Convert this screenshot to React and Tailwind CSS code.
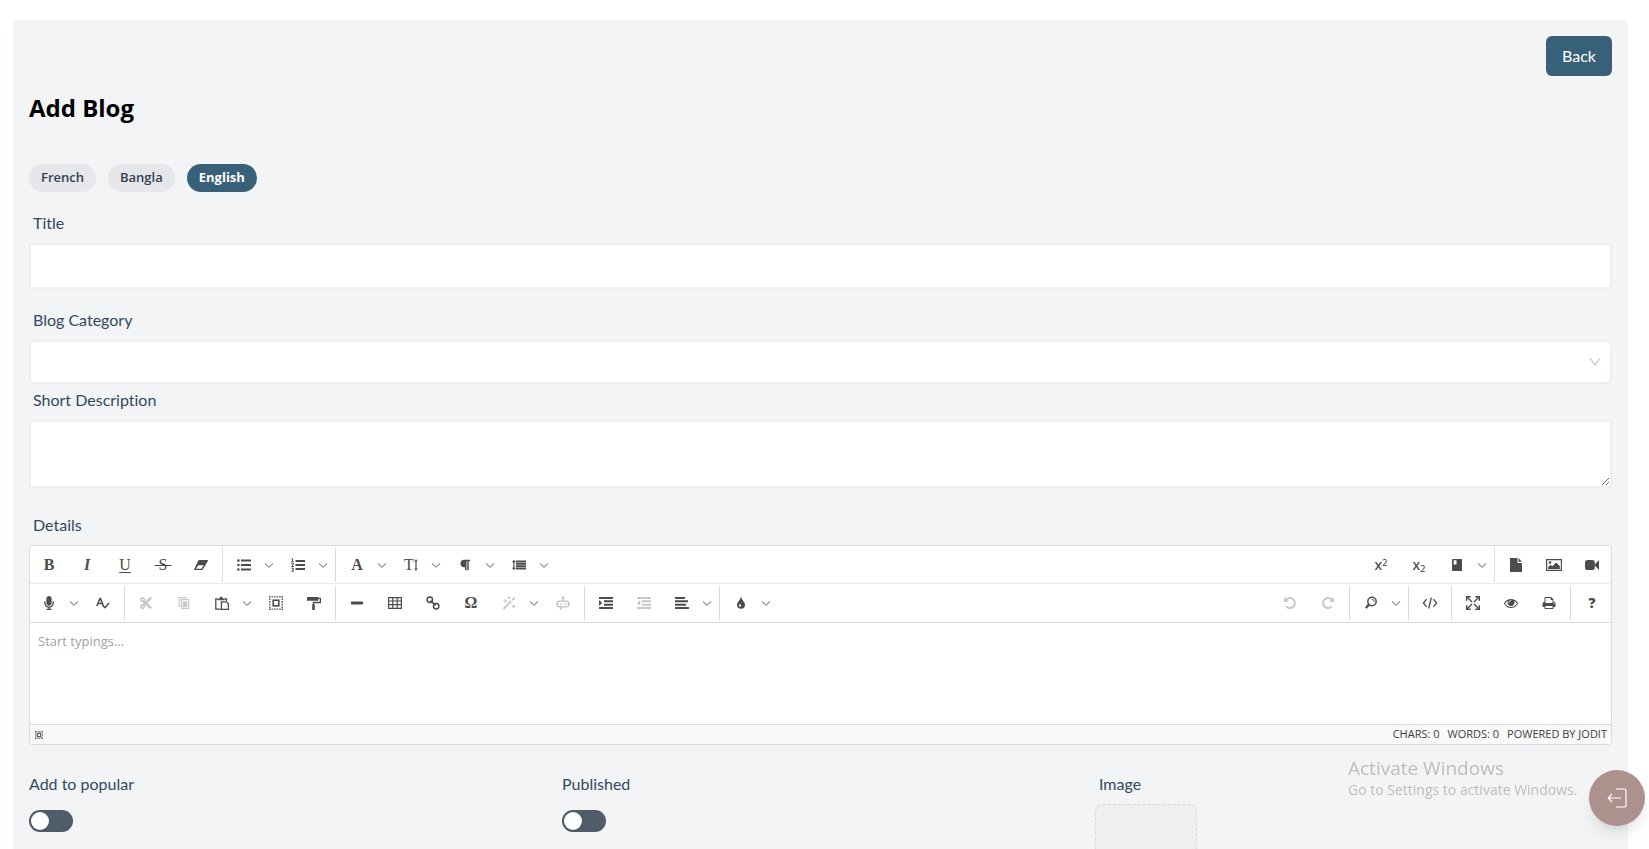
import React, { useState } from 'react';
import { FaMicrophone, FaParagraph, FaCut } from 'react-icons/fa';

const Svg = ({ children, viewBox = '0 0 14 14' }) => (
  <svg viewBox={viewBox} className="w-3.5 h-3.5" fill="currentColor" aria-hidden="true">
    {children}
  </svg>
);

const Stroke = ({ d, width = 1.2 }) => (
  <path d={d} fill="none" stroke="currentColor" strokeWidth={width} />
);

const Glyph = ({ children, className = '' }) => (
  <span className={`font-['Liberation_Serif',serif] leading-none ${className}`}>{children}</span>
);

const icons = {
  bold: <Glyph className="text-base font-bold">B</Glyph>,
  italic: <Glyph className="text-base font-bold italic">I</Glyph>,
  underline: <Glyph className="text-base underline underline-offset-2 decoration-1">U</Glyph>,
  strike: <Glyph className="text-base line-through decoration-1">&nbsp;S&nbsp;</Glyph>,
  eraser: (
    <Svg>
      <path fillRule="evenodd" d="M5.4 2h8q.9.2.4 1.200L8.700 11.500q-.4.600-1 .600H.6q-.9-.2-.4-1.200L4.400 2.600q.4-.6 1-.6zM4.500 7.200 1.700 10.800h5.600l2.400-3.600z" />
    </Svg>
  ),
  ul: (
    <Svg>
      <path d="M4 1.5h10v2H4zM4 6h10v2H4zM4 10.5h10v2H4z" />
      <circle cx="1.4" cy="2.5" r="1.3" />
      <circle cx="1.4" cy="7" r="1.3" />
      <circle cx="1.4" cy="11.5" r="1.3" />
    </Svg>
  ),
  ol: (
    <Svg>
      <path d="M4.5 2H14v2H4.500zM4.500 6H14v2H4.500zM4.500 10H14v2H4.500z" />
      <Stroke width={1} d="M.5.8h1v3M.3 3.900h2.600M.4 5.600h2v1.200L.7 8.500h2.200M.4 10.200h2L1.400 11.600h1v1.700H.3" />
    </Svg>
  ),
  font: <Glyph className="text-base font-bold">A</Glyph>,
  fontsize: (
    <span className="flex items-center">
      <Glyph className="text-base">T</Glyph>
      <svg viewBox="0 0 4 14" className="w-1 h-3.5" fill="currentColor" aria-hidden="true">
        <path d="M1.400 2h1.200v10H1.400zM2 1l1.700 2.500H.3zM2 13 .3 10.500h3.400z" />
      </svg>
    </span>
  ),
  paragraph: <FaParagraph className="w-3 h-3" />,
  lineHeight: (
    <Svg>
      <path d="M4 2.500h10v2H4zM4 5h10v1.700H4zM4 7.300h10V9H4zM4 9.600h10v2H4zM1.300 3.500h1.200v7H1.300zM1.900 1.700l2 2.600H0zM1.900 12.300 0 9.700h3.900z" />
    </Svg>
  ),
  mic: <FaMicrophone className="w-3.5 h-3.5" />,
  spell: (
    <Svg>
      <Stroke width={1.5} d="M.8 10 4 2.500h.5L7.400 10M2 7.400h4.400M6.400 9l2.600 2.700 4-4.600" />
    </Svg>
  ),
  cut: <FaCut className="w-3.5 h-3.5" />,
  copy: (
    <Svg>
      <Stroke d="M3.600 10.400H2.200V1.600h7v1.200M4.600 3.600h7v8.800h-7z" />
      <path d="M6 5.500h4.200V11H6z" />
    </Svg>
  ),
  paste: (
    <Svg>
      <Stroke width={1.3} d="M5.800 13.200H.8V3h2M9.500 3h2v2" />
      <path d="M3 4.300V2.600h1.700Q4.800.4 6.200.4t1.600 2.200h1.700v1.700z" />
      <Stroke width={1.3} d="M6.400 5.800h5l2 2v5.500h-7z" />
    </Svg>
  ),
  selectall: (
    <Svg>
      <rect x="4.2" y="4.2" width="5.6" height="5.6" fill="none" stroke="currentColor" strokeWidth="1.6" />
      <path d="M0 .8h14M0 13.200h14M.8 0v14M13.200 0v14" fill="none" stroke="currentColor" strokeWidth="1.3" strokeDasharray="1.55 1" />
    </Svg>
  ),
  brush: (
    <Svg>
      <path d="M0 1h11.500v3.800H0z" />
      <Stroke width={1.3} d="M11.500 2.300h2v4.200H6.400v2" />
      <path d="M5.200 8.200h2.600V14H5.200z" />
    </Svg>
  ),
  hr: (
    <Svg>
      <rect x="1" y="5.6" width="12" height="2.8" rx=".6" />
    </Svg>
  ),
  table: (
    <Svg>
      <Stroke d="M.6 1.600h12.800v10.800H.6zM.6 5h12.800M.6 8.600h12.800M4.800 1.600v10.800M9.200 1.600v10.800" />
    </Svg>
  ),
  link: (
    <Svg>
      <circle cx="3.8" cy="3.8" r="2.7" fill="none" stroke="currentColor" strokeWidth="1.5" />
      <circle cx="10.2" cy="10.2" r="2.7" fill="none" stroke="currentColor" strokeWidth="1.5" />
      <Stroke width={1.5} d="M4.500 4.500q.8 2.700 2.500 2.500t2.500 2.500" />
    </Svg>
  ),
  omega: <Glyph className="text-base font-bold">Ω</Glyph>,
  magic: (
    <Svg>
      <Stroke width={2} d="M1.500 13 9.200 5.200M10.200 4.200l2.500-2.600" />
      <Stroke width={1.2} d="M3.200 3v4M1.200 5h4M7 .3v3M5.500 1.800h3M11.500 8.500v3.600M9.700 10.300h3.600" />
    </Svg>
  ),
  robot: (
    <Svg>
      <Stroke width={1.5} d="M3 5.200h8q1.400 0 1.400 1.400v2.800q0 1.400-1.400 1.400H6.500L4.600 12.800v-2H3q-1.400 0-1.400-1.400V6.600q0-1.400 1.400-1.400zM7 5V2.500M.5 6.800v2.400M13.500 6.800v2.400" />
      <circle cx="7" cy="1.800" r="1.5" />
      <circle cx="4.9" cy="8" r="1" />
      <circle cx="9.1" cy="8" r="1" />
    </Svg>
  ),
  indent: (
    <Svg>
      <path d="M0 1h14v2H0zM5 4.300h9v2H5zM5 7.700h9v2H5zM0 11h14v2H0zM0 4l3.200 3L0 10z" />
    </Svg>
  ),
  outdent: (
    <Svg>
      <path d="M0 1h14v2H0zM5 4.300h9v2H5zM5 7.700h9v2H5zM0 11h14v2H0zM3.200 4 0 7l3.200 3z" />
    </Svg>
  ),
  alignLeft: (
    <Svg>
      <path d="M0 1h10v2H0zM0 4.300h13v2H0zM0 7.700h11v2H0zM0 11h14v2H0z" />
    </Svg>
  ),
  drop: (
    <Svg>
      <path fillRule="evenodd" d="M7 .5q.7 2.700 2.400 4.800Q11 7.200 11 8.700a4 4 0 0 1-8 0q0-1.500 1.600-3.400Q6.300 3.200 7 .5zM5 8.500v2h2v-2z" />
    </Svg>
  ),
  sup: (
    <span className="font-['Noto_Sans',sans-serif] text-sm leading-none font-medium">
      x<sup className="text-[9px]">2</sup>
    </span>
  ),
  sub: (
    <span className="font-['Noto_Sans',sans-serif] text-sm leading-none font-medium">
      x<sub className="text-[9px]">2</sub>
    </span>
  ),
  book: (
    <Svg>
      <path fillRule="evenodd" d="M3 1h8.200q.8 0 .8.800v10.400q0 .8-.8.800H3q-1 0-1-1V2q0-1 1-1zM3.700 2.200v4.300h2.800V2.200z" />
    </Svg>
  ),
  file: (
    <Svg>
      <path d="M1 0h7.500v5H13v9H1zM9.500 0 13 3.800H9.500z" />
    </Svg>
  ),
  image: (
    <svg viewBox="0 0 16 14" className="w-4 h-3.5" fill="currentColor" aria-hidden="true">
      <Stroke d="M.6 1.600h14.800v10.800H.6z" />
      <circle cx="4" cy="4.6" r="1.3" />
      <path d="M2.200 11V9l2.400-2.300L6.300 8.300 10.200 4.400 13.800 8v3z" />
    </svg>
  ),
  video: (
    <Svg>
      <rect x="0" y="2" width="9.8" height="10" rx="2.6" />
      <path d="M9.200 7 14 2v10z" />
    </Svg>
  ),
  undo: (
    <Svg>
      <Stroke width={2} d="M2.800 4.200A5 5 0 1 1 3.200 10.400" />
      <path d="M1 1v5h5z" />
    </Svg>
  ),
  redo: (
    <Svg>
      <Stroke width={2} d="M11.200 4.200A5 5 0 1 0 10.800 10.400" />
      <path d="M13 1v5H8z" />
    </Svg>
  ),
  search: (
    <Svg>
      <circle cx="8" cy="5.5" r="4.2" fill="none" stroke="currentColor" strokeWidth="1.5" />
      <Stroke width={2.4} d="M5 8.700 1.800 12" />
      <Stroke width={1} d="M8 3.300q2 .2 2.200 2.200" />
    </Svg>
  ),
  code: (
    <svg viewBox="0 0 16 14" className="w-4 h-3.5" aria-hidden="true">
      <Stroke width={1.3} d="M4.600 3.200 1.400 7l3.200 3.800M11.400 3.200 14.600 7l-3.200 3.800M9.300 1.500 6.700 12.500" />
    </svg>
  ),
  fullsize: (
    <Svg>
      <Stroke width={1.3} d="M1 1l5 5M13 1 8 6M1 13l5-5M13 13 8 8" />
      <Stroke width={1.5} d="M.7 4.700v-4h4M9.300.7h4v4M.7 9.300v4h4M13.300 9.300v4h-4" />
    </Svg>
  ),
  eye: (
    <Svg viewBox="0 0 1792 1792">
      <path d="M1664 960q-152-236-381-353 61 104 61 225 0 185-131.500 316.500t-316.500 131.500-316.500-131.500-131.500-316.500q0-121 61-225-229 117-381 353 133 205 333.500 326.500t434.500 121.500 434.500-121.500 333.500-326.500zm-720-384q0-20-14-34t-34-14q-125 0-214.500 89.500t-89.500 214.500q0 20 14 34t34 14 34-14 14-34q0-86 61-147t147-61q20 0 34-14t14-34zm848 384q0 34-20 69-140 230-376.500 368.500t-499.500 138.500-499.500-139-376.500-368q-20-35-20-69t20-69q140-229 376.500-368t499.500-139 499.500 139 376.500 368q20 35 20 69z" />
    </Svg>
  ),
  print: (
    <Svg viewBox="0 0 1792 1792">
      <path d="M448 1536h896v-256h-896v256zm0-640h896v-384h-160q-40 0-68-28t-28-68v-160h-640v640zm1152 64q0-26-19-45t-45-19-45 19-19 45 19 45 45 19 45-19 19-45zm128 0v416q0 13-9.500 22.500t-22.500 9.500h-224v160q0 40-28 68t-68 28h-960q-40 0-68-28t-28-68v-160h-224q-13 0-22.500-9.500t-9.500-22.500v-416q0-79 56.500-135.500t135.500-56.500h64v-544q0-40 28-68t68-28h672q40 0 88 20t76 48l152 152q28 28 48 76t20 88v256h64q79 0 135.500 56.500t56.500 135.500z" />
    </Svg>
  ),
  about: <span className="font-['Open_Sans',sans-serif] text-sm leading-none font-extrabold">?</span>,
};

// each inner array is a separated group: [icon, label, hasMenu, disabled]
const rowOneLeft = [
  [['bold', 'Bold'], ['italic', 'Italic'], ['underline', 'Underline'], ['strike', 'Strike through'], ['eraser', 'Clear formatting']],
  [['ul', 'Insert unordered list', true], ['ol', 'Insert ordered list', true]],
  [['font', 'Font family', true], ['fontsize', 'Font size', true], ['paragraph', 'Format block', true], ['lineHeight', 'Line height', true]],
];
const rowOneRight = [
  [['sup', 'Superscript'], ['sub', 'Subscript'], ['book', 'Insert class name', true]],
  [['file', 'Insert file'], ['image', 'Insert image'], ['video', 'Insert video']],
];
const rowTwoLeft = [
  [['mic', 'Speech recognize', true], ['spell', 'Spellcheck']],
  [['cut', 'Cut', false, true], ['copy', 'Copy', false, true], ['paste', 'Paste', true], ['selectall', 'Select all'], ['brush', 'Paint format']],
  [['hr', 'Insert horizontal line'], ['table', 'Insert table'], ['link', 'Insert link'], ['omega', 'Insert special character'], ['magic', 'AI commands', true, true], ['robot', 'AI assistant', false, true]],
  [['indent', 'Increase indent'], ['outdent', 'Decrease indent', false, true], ['alignLeft', 'Align', true]],
  [['drop', 'Fill color', true]],
];
const rowTwoRight = [
  [['undo', 'Undo', false, true], ['redo', 'Redo', false, true]],
  [['search', 'Find', true]],
  [['code', 'Change mode']],
  [['fullsize', 'Open in fullsize'], ['eye', 'Preview'], ['print', 'Print']],
  [['about', 'About Jodit']],
];

const ToolButton = ({ icon, label, menu, disabled }) => (
  <div className="flex mx-0.5 text-[#4c4c4c]">
    <button
      type="button"
      aria-label={label}
      disabled={disabled}
      className="w-[34px] h-[34px] flex items-center justify-center rounded hover:bg-gray-200 disabled:opacity-30"
    >
      {icons[icon]}
    </button>
    {menu && (
      <button type="button" aria-label={`${label} options`} className="w-4 h-[34px] flex items-center justify-center">
        <svg viewBox="0 0 10 10" className="w-2.5 h-2.5" aria-hidden="true">
          <path d="M1 3.500 5 7.200 9 3.500" fill="none" stroke="#999" strokeWidth="1.3" />
        </svg>
      </button>
    )}
  </div>
);

const ToolGroups = ({ groups }) => (
  <div className="flex">
    {groups.map((group, i) => (
      <React.Fragment key={i}>
        {i > 0 && <span className="w-px h-[34px] mx-0.5 bg-[#dadada]" />}
        {group.map(([icon, label, menu, disabled]) => (
          <ToolButton key={icon} icon={icon} label={label} menu={menu} disabled={disabled} />
        ))}
      </React.Fragment>
    ))}
  </div>
);

const Label = ({ children, ...props }) => (
  <label className="block w-fit ml-1 mb-2 leading-6 text-[#34495e]" {...props}>
    {children}
  </label>
);

const Toggle = ({ id, label }) => (
  <div>
    <label htmlFor={id} className="block w-fit mb-3.5 leading-6 text-[#34495e]">
      {label}
    </label>
    <input
      id={id}
      type="checkbox"
      role="switch"
      className="block appearance-none w-11 h-[22px] p-0.5 rounded-full bg-[#505c68] checked:bg-[#386179] cursor-pointer before:block before:w-[18px] before:h-[18px] before:rounded-full before:bg-white before:shadow checked:before:ml-[22px]"
    />
  </div>
);

const languages = ['French', 'Bangla', 'English'];

const App = () => {
  const [language, setLanguage] = useState('English');

  return (
    <div className="pt-5 pl-[13px] pr-[21px] bg-white font-['Lato','Noto_Sans',sans-serif] text-base [font-variant-ligatures:none]">
      <form className="p-4 rounded-md bg-[#f2f4f6]" onSubmit={(e) => e.preventDefault()}>
        <div className="flex justify-end">
          <button type="button" className="h-10 px-4 rounded-md bg-[#386179] text-white">
            Back
          </button>
        </div>

        <h1 className="mt-4 leading-8 text-2xl font-bold text-black font-['Open_Sans',sans-serif]">Add Blog</h1>

        <div className="flex gap-3 mt-10 mb-[19px]">
          {languages.map((name) => (
            <button
              key={name}
              type="button"
              onClick={() => setLanguage(name)}
              className={
                name === language
                  ? "h-7 px-3 rounded-full text-[13px] font-['Open_Sans',sans-serif] font-bold bg-[#386179] text-white"
                  : "h-7 px-3 rounded-full text-[13px] font-['Open_Sans',sans-serif] font-semibold bg-[#e5e7eb] text-gray-700"
              }
            >
              {name}
            </button>
          ))}
        </div>

        <Label htmlFor="title">Title</Label>
        <input id="title" type="text" className="block w-full h-[46px] px-3 border-2 border-[#efedef] bg-white outline-none mb-[19px]" />

        <Label htmlFor="category">Blog Category</Label>
        <div className="relative mb-1">
          <select id="category" defaultValue="" className="block appearance-none w-full h-11 px-3 border-2 border-[#efedef] rounded-md bg-white outline-none">
            <option value=""></option>
          </select>
          <svg viewBox="0 0 12 12" className="absolute right-[11px] top-4 w-3 h-3 pointer-events-none" aria-hidden="true">
            <path d="M1.300 2.500 6 9l4.700-6.500" fill="none" stroke="#bfbfbf" strokeWidth="1.1" />
          </svg>
        </div>

        <Label htmlFor="short">Short Description</Label>
        <textarea id="short" className="block w-full h-[68px] px-3 py-2 border-2 border-[#efedef] bg-white outline-none mb-[25px]" />

        <Label htmlFor="details">Details</Label>
        <div className="border border-[#dadada] rounded-[3px] bg-white overflow-hidden">
          <div className="flex justify-between h-[38px] pt-0.5 border-b border-[#ebebeb]">
            <ToolGroups groups={rowOneLeft} />
            <ToolGroups groups={rowOneRight} />
          </div>
          <div className="flex justify-between h-[39px] pt-0.5 border-b border-[#dadada]">
            <ToolGroups groups={rowTwoLeft} />
            <ToolGroups groups={rowTwoRight} />
          </div>
          <textarea
            id="details"
            placeholder="Start typings..."
            className="block w-full h-[101px] p-2 resize-none outline-none text-[13px] leading-5 font-['Open_Sans',sans-serif] placeholder:text-[#a1a1a1]"
          />
          <div className="flex items-center h-5 px-1 border-t border-[#dadada] bg-[#f9f9f9] text-[11px] uppercase text-[#404040] font-['Open_Sans',sans-serif]">
            <button type="button" aria-label="Select all" className="flex mx-px">
              <svg viewBox="0 0 14 14" className="w-2 h-2 text-[#4c4c4c]" aria-hidden="true">
                <rect x="4" y="4" width="6" height="6" fill="none" stroke="currentColor" strokeWidth="2" />
                <path d="M0 1h14M0 13h14M1 0v14M13 0v14" fill="none" stroke="currentColor" strokeWidth="1.5" strokeDasharray="1.55 1" />
              </svg>
            </button>
            <span className="ml-auto">Chars: 0</span>
            <span className="ml-2">Words: 0</span>
            <a href="#jodit" className="ml-2">Powered by Jodit</a>
          </div>
        </div>

        <div className="grid grid-cols-3 gap-4 mt-[27px]">
          <Toggle id="popular" label="Add to popular" />
          <Toggle id="published" label="Published" />
          <div>
            <Label htmlFor="image">Image</Label>
            <label htmlFor="image" className="block w-[102px] h-[102px] rounded-lg border border-dashed border-[#d9d9d9] bg-[#edeff1] cursor-pointer" />
            <input id="image" type="file" className="sr-only" />
          </div>
        </div>
      </form>

      <div className="fixed right-[65px] bottom-[49px] w-[236px] text-[#bbbdbf] font-['Open_Sans',sans-serif] pointer-events-none">
        <p className="text-[19px] leading-6">Activate Windows</p>
        <p className="text-sm leading-5 whitespace-nowrap">Go to Settings to activate Windows.</p>
      </div>

      <button
        type="button"
        aria-label="Logout"
        className="fixed right-1 bottom-[23px] w-14 h-14 flex items-center justify-center rounded-full bg-[#ad918d] text-white shadow-lg"
      >
        <svg viewBox="0 0 20 20" className="w-5 h-5" fill="none" stroke="currentColor" strokeWidth="1.2" aria-hidden="true">
          <path d="M9 1H17.500Q19 1 19 2.500V17.500Q19 19 17.500 19H9" />
          <path d="M14 10H1.500M5 6 1.200 10 5 14" />
        </svg>
      </button>
    </div>
  );
};

export default App;
